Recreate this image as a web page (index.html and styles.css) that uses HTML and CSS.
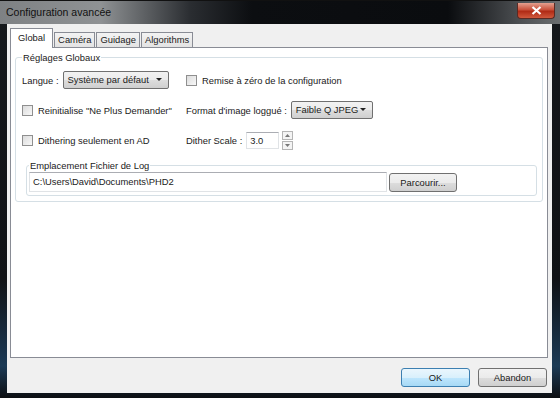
FILE: index.html
```html
<!DOCTYPE html>
<html>
<head>
    <title>Configuration avancée</title>
    <link rel="stylesheet" href="styles.css">
</head>
<body>
    <div class="window">
        <div class="titlebar">
            <span class="title">Configuration avancée</span>
            <div class="close">
                <svg width="11" height="9" viewBox="0 0 11 9"><path d="M1.5 1 L9.5 8 M9.5 1 L1.5 8" stroke="#fff" stroke-width="2.2"/></svg>
            </div>
        </div>

        <div class="client">
            <div class="tabs">
                <div class="tab active">Global</div>
                <div class="tab">Caméra</div>
                <div class="tab">Guidage</div>
                <div class="tab">Algorithms</div>
            </div>

            <div class="panel">
                <fieldset class="group">
                    <legend>Réglages Globaux</legend>
                    <div class="grid">
                        <div class="cell">
                            <span class="label">Langue :</span>
                            <div class="combo lang">Système par défaut<span class="arrow"></span></div>
                        </div>
                        <div class="cell">
                            <span class="check"></span>
                            <span>Remise à zéro de la configuration</span>
                        </div>

                        <div class="cell">
                            <span class="check"></span>
                            <span>Reinitialise "Ne Plus Demander"</span>
                        </div>
                        <div class="cell">
                            <span class="label">Format d'image loggué :</span>
                            <div class="combo fmt">Faible Q JPEG<span class="arrow"></span></div>
                        </div>

                        <div class="cell">
                            <span class="check"></span>
                            <span>Dithering seulement en AD</span>
                        </div>
                        <div class="cell">
                            <span class="label">Dither Scale :</span>
                            <div class="spin-input">3.0</div>
                            <div class="spin-btns">
                                <span class="spin-btn"><svg width="5" height="3" viewBox="0 0 5 3"><path d="M0 3 L2.5 0 L5 3Z" fill="#777"/></svg></span>
                                <span class="spin-btn"><svg width="5" height="3" viewBox="0 0 5 3"><path d="M0 0 L2.5 3 L5 0Z" fill="#777"/></svg></span>
                            </div>
                        </div>
                    </div>

                    <fieldset class="group log">
                        <legend>Emplacement Fichier de Log</legend>
                        <div class="log-row">
                            <div class="textbox">C:\Users\David\Documents\PHD2</div>
                            <div class="button browse">Parcourir...</div>
                        </div>
                    </fieldset>
                </fieldset>
            </div>

            <div class="buttons">
                <div class="button default">OK</div>
                <div class="button">Abandon</div>
            </div>
        </div>
    </div>
</body>
</html>
```

FILE: styles.css
```css
body {
    margin: 0;
    font-family: "Liberation Sans", Arial, sans-serif;
    font-size: 9.4px;
    color: #1a1a1a;
}
.window {
    width: 560px;
    height: 398px;
    box-sizing: border-box;
    padding: 0 8px 5px 7px;
    display: flex;
    flex-direction: column;
    background: linear-gradient(180deg, #16191d 0%, #101215 70%, #1c3a55 92%, #0d0f12 100%);
}
.titlebar {
    height: 24px;
    margin: 0 -8px 0 -7px;
    padding: 0 5px 0 6px;
    display: flex;
    align-items: flex-start;
    justify-content: space-between;
    background: linear-gradient(90deg, #7e8184 0%, #8f9294 18%, #2a2d31 34%, #0c0e11 45%, #0a0c0f 80%, #4d5053 93%, #6b6e70 100%);
    border-top: 1px solid #111;
    box-sizing: border-box;
}
.title {
    margin-top: 5px;
    font-size: 10.5px;
    color: #111;
}
.close {
    width: 36px;
    height: 15px;
    margin-top: 2px;
    border: 1px solid #5a2a24;
    border-top: none;
    border-radius: 0 0 4px 4px;
    background: linear-gradient(180deg, #e4a08f 0%, #c8503a 45%, #b02a15 55%, #d0583c 100%);
    display: flex;
    align-items: center;
    justify-content: center;
}
.client {
    flex: 1;
    background: #f0f0f0;
    display: flex;
    flex-direction: column;
    padding: 4px 4px 0 3px;
}
.tabs {
    display: flex;
    align-items: flex-end;
    height: 19px;
}
.tab {
    height: 15px;
    padding: 0 3px;
    border: 1px solid #898c95;
    border-bottom: none;
    margin-right: 1px;
    background: linear-gradient(180deg, #f3f3f3, #e3e3e3);
    line-height: 14px;
    box-sizing: border-box;
}
.tab.active {
    height: 20px;
    padding: 0 7px;
    background: #fff;
    margin-bottom: -1px;
    position: relative;
    z-index: 1;
    line-height: 18px;
}
.panel {
    height: 311px;
    box-sizing: border-box;
    background: #fff;
    border: 1px solid #898c95;
    padding: 4px 4px 0 4px;
}
.group {
    margin: 0;
    border: 1px solid #d5dfe5;
    border-radius: 3px;
    padding: 0 5px 5px 6px;
}
.group legend {
    padding: 0 1px;
}
.grid {
    display: grid;
    grid-template-columns: 164px 1fr;
    grid-template-rows: 28px 32px 29px;
    margin-top: 3px;
}
.cell {
    display: flex;
    align-items: center;
    gap: 4px;
}
.check {
    width: 9px;
    height: 9px;
    border: 1px solid #8f8f8f;
    background: linear-gradient(135deg, #dcdcdc, #f8f8f8);
    margin-right: 1px;
}
.combo {
    position: relative;
    height: 18px;
    box-sizing: border-box;
    border: 1px solid #707070;
    border-radius: 2px;
    background: linear-gradient(180deg, #f2f2f2 0%, #ebebeb 50%, #dddddd 51%, #cfcfcf 100%);
    padding: 0 4px;
    line-height: 16px;
}
.combo.lang {
    width: 106px;
}
.combo.fmt {
    width: 82px;
}
.arrow {
    position: absolute;
    right: 6px;
    top: 6px;
    border-left: 3px solid transparent;
    border-right: 3px solid transparent;
    border-top: 3px solid #222;
}
.spin-input {
    width: 33px;
    height: 17px;
    box-sizing: border-box;
    border: 1px solid #e0e3e6;
    border-top-color: #abadb3;
    padding-left: 3px;
    line-height: 15px;
}
.spin-btns {
    display: flex;
    flex-direction: column;
    gap: 1px;
    margin-left: -1px;
}
.spin-btn {
    width: 9px;
    height: 7px;
    border: 1px solid #b5b5b5;
    background: #f4f4f4;
    display: flex;
    align-items: center;
    justify-content: center;
}
.group.log {
    margin: 5px 0 0 4px;
    padding: 1px 2px 3px 2px;
}
.log-row {
    display: flex;
    align-items: center;
    gap: 2px;
}
.textbox {
    width: 358px;
    height: 20px;
    box-sizing: border-box;
    border: 1px solid #e0e3e6;
    border-top-color: #abadb3;
    padding-left: 3px;
    line-height: 18px;
}
.button {
    width: 69px;
    height: 19px;
    box-sizing: border-box;
    border: 1px solid #707070;
    border-radius: 3px;
    background: linear-gradient(180deg, #f2f2f2 0%, #ebebeb 50%, #dddddd 51%, #cfcfcf 100%);
    text-align: center;
    line-height: 17px;
}
.button.browse {
    width: 68px;
}
.button.default {
    border-color: #3c7fb1;
    background: linear-gradient(180deg, #eaf6fd 0%, #d9f0fc 50%, #bee6fd 51%, #a7d9f5 100%);
}
.buttons {
    display: flex;
    justify-content: flex-end;
    gap: 8px;
    padding: 10px 1px 0 0;
}
```
